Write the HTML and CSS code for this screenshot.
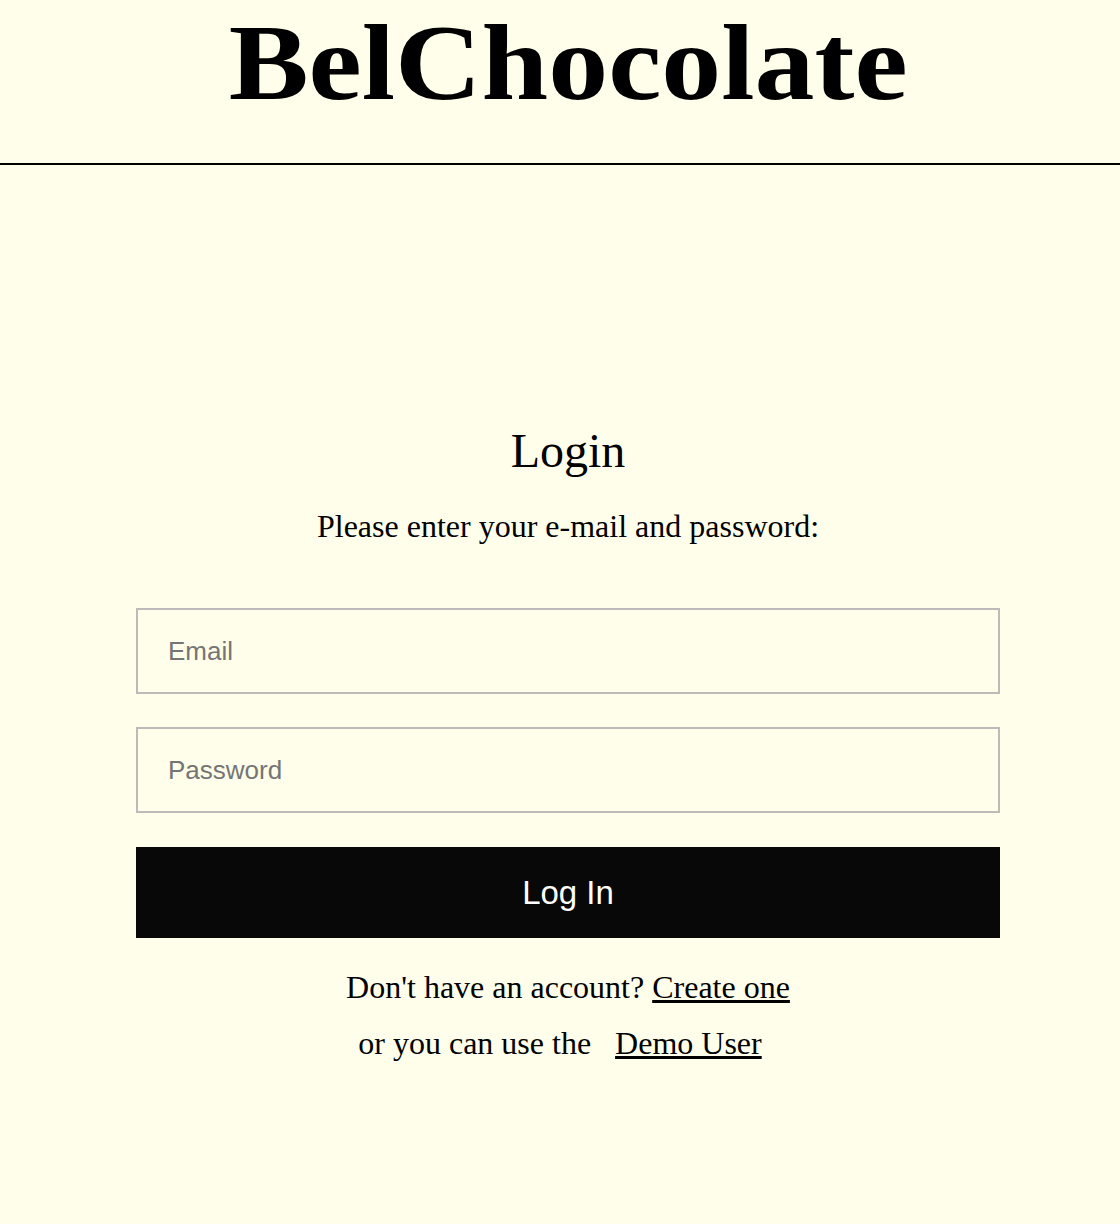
FILE: index.html
```html
<!DOCTYPE html>
<html lang="en">
<head>
<meta charset="utf-8">
<title>BelChocolate - Login</title>
<link rel="stylesheet" href="styles.css">
</head>
<body>
<header class="site-header">
  <h1 class="brand"><span class="brand-text">BelChocolate</span></h1>
</header>
<main class="page">
  <section class="login">
    <h2 class="login-title">Login</h2>
    <p class="login-sub">Please enter your e-mail and password:</p>
    <form class="login-form">
      <input class="field" type="email" placeholder="Email">
      <input class="field" type="password" placeholder="Password">
      <button class="submit" type="button">Log In</button>
    </form>
    <p class="alt">Don't have an account? <a href="#" class="link">Create one</a></p>
    <p class="alt">or you can use the <a href="#" class="link demo">Demo User</a></p>
  </section>
</main>
</body>
</html>
```
FILE: styles.css
```css
html, body {
  margin: 0;
  padding: 0;
  background: #fffeea;
  color: #000;
  font-family: "Liberation Serif", "Times New Roman", serif;
}

.site-header {
  height: 163px;
  border-bottom: 2px solid #000;
  padding-left: 16px;
  box-sizing: content-box;
}

.brand {
  margin: 0;
  padding-top: 10px;
  text-align: center;
  font-family: "Liberation Serif", Georgia, serif;
  font-weight: 700;
  font-size: 107px;
  line-height: 107px;
}

.brand-text {
  display: inline-block;
  transform: scaleX(1.12);
}

.page {
  padding-left: 16px;
}

.login {
  width: 864px;
  margin: 0 auto;
  padding-top: 258px;
  text-align: center;
}

.login-title {
  margin: 0;
  font-weight: 400;
  font-size: 48px;
  line-height: 56px;
}

.login-sub {
  margin: 29px 0 0;
  font-size: 32px;
  line-height: 36px;
}

.login-form {
  margin-top: 64px;
  display: flex;
  flex-direction: column;
}

.field {
  box-sizing: border-box;
  height: 86px;
  width: 100%;
  margin: 0 0 33px;
  padding: 0 30px;
  border: 2px solid #bfbaba;
  background: transparent;
  font-family: "Liberation Sans", Arial, sans-serif;
  font-size: 26px;
  color: #000;
  outline: none;
}

.field::placeholder {
  color: #757575;
}

.submit {
  margin-top: 1px;
  height: 91px;
  width: 100%;
  border: 0;
  background: #080808;
  color: #fff;
  font-family: "Liberation Sans", Arial, sans-serif;
  font-size: 33px;
  cursor: pointer;
}

.alt {
  margin: 0;
  font-size: 32px;
  line-height: 56px;
}

.login-form + .alt {
  margin-top: 21px;
}

.link {
  color: #000;
  text-decoration: underline;
}

.demo {
  margin: 0 16px;
}
```
